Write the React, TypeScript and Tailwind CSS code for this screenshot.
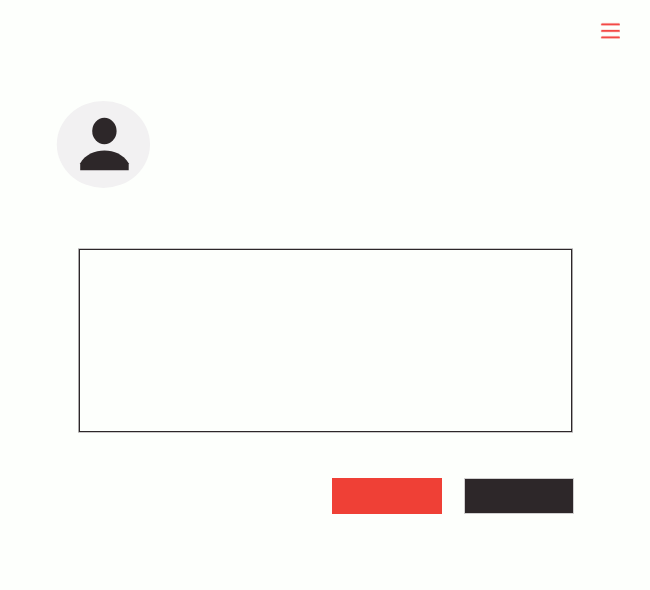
export default function App() {
  return (
    <main className="flex h-[590px] w-[650px] flex-col overflow-hidden bg-[#fdfffc]">
      <header className="flex h-[100px] justify-end pt-[21px] pr-[30px]">
        <button aria-label="Menu" className="h-5 w-5">
          <svg width="20" height="20" viewBox="0 0 20 20" fill="none" stroke="#f23c38" strokeLinecap="round">
            <path d="M2.2 3.4H18.8M2.2 9.9H18.8M2.2 16.4H18.8" strokeWidth="3.4" opacity="0.18" />
            <path d="M2.1 3.4H18.9M2.1 9.9H18.9M2.1 16.4H18.9" strokeWidth="1.9" opacity="0.92" />
          </svg>
        </button>
      </header>
      <section className="ml-[56px] h-[88px] w-[95px]">
        <svg width="95" height="88" viewBox="0 0 95 88">
          <ellipse cx="47.4" cy="44.4" rx="46.6" ry="43.5" fill="#f2f1f2" />
          <ellipse cx="48.4" cy="31" rx="12.2" ry="13.2" fill="#2d2729" />
          <path d="M24.2 70.3V63.3C29 54.5 39 50.5 48.5 50.5C58 50.5 67.5 54.5 72.7 63.3V70.3Z" fill="#2d2729" />
        </svg>
      </section>
      <section className="mt-[61px] ml-[79px] h-[183px] w-[493px] border border-[#2d2729] shadow-[-1px_0_0_#a9a8a8,1px_0_0_#a9a8a8,0_0_0_1px_#c9c8c8]" />
      <footer className="mt-[46px] ml-[332px] flex items-center gap-[23px]">
        <button aria-label="Primary action" className="h-[36px] w-[110px] bg-[#ef4036]" />
        <button aria-label="Secondary action" className="h-[34px] w-[108px] bg-[#2d2729] ring-1 ring-[#d0cfcf]" />
      </footer>
    </main>
  );
}
